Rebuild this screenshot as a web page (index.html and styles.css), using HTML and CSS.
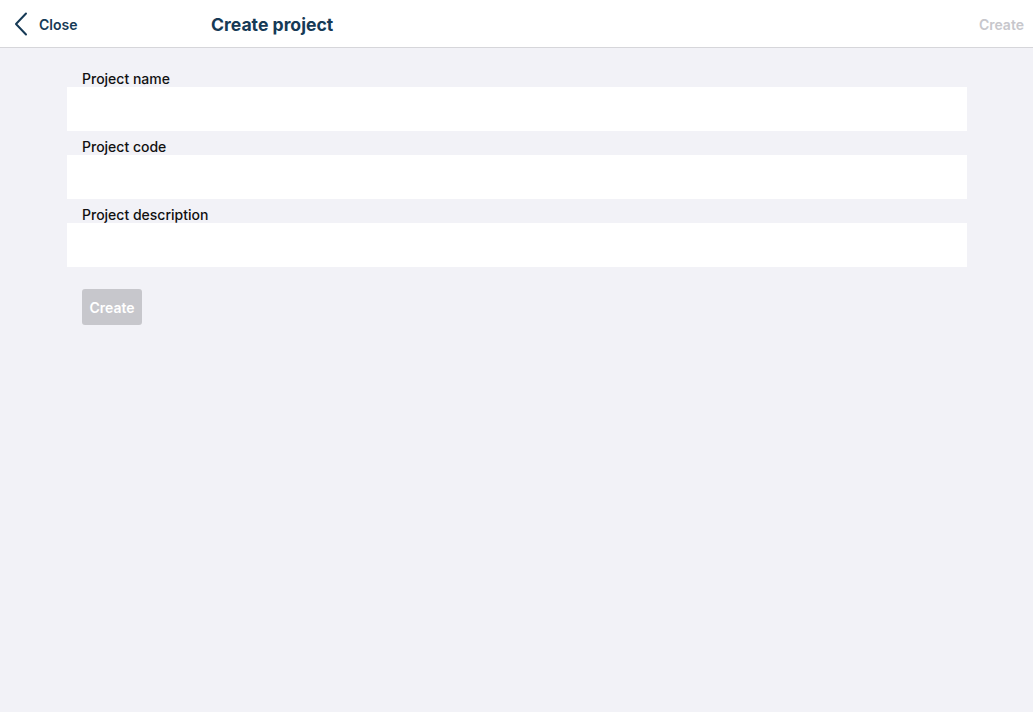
FILE: index.html
```html
<!DOCTYPE html>
<html lang="en">

<head>
    <meta charset="UTF-8">
    <meta name="viewport" content="width=device-width, initial-scale=1.0">
    <title>Create project</title>
    <link rel="stylesheet" href="styles.css">
</head>

<body>
    <header class="topbar">
        <a class="back" href="#">
            <svg width="14" height="24" viewBox="0 0 14 24"><path d="M12 1.5 L2 12 L12 22.5" fill="none" stroke="#163a56" stroke-width="2" stroke-linecap="round" stroke-linejoin="round"/></svg>
            <span>Close</span>
        </a>
        <h1 class="title">Create project</h1>
        <button class="top-create" disabled>Create</button>
    </header>
    <main class="form">
        <label class="label" for="name">Project name</label>
        <input class="field" type="text" id="name" />
        <label class="label" for="code">Project code</label>
        <input class="field" type="text" id="code" />
        <label class="label" for="desc">Project description</label>
        <input class="field" type="text" id="desc" />
        <div class="actions">
            <button class="create-btn" disabled>Create</button>
        </div>
    </main>
</body>

</html>
```

FILE: styles.css
```css
* {
    margin: 0;
    padding: 0;
    box-sizing: border-box;
}

body {
    background-color: #f2f2f7;
    font-family: Inter, "Noto Sans", sans-serif;
    height: 100vh;
}

.topbar {
    display: flex;
    align-items: center;
    height: 48px;
    background-color: #fff;
    border-bottom: 1px solid #d6d6da;
    padding: 0 9px 0 14px;
}

.back {
    display: flex;
    align-items: center;
    gap: 11px;
    text-decoration: none;
    color: #163a56;
    font-size: 14px;
    font-weight: 600;
    width: 197px;
}

.back span {
    margin-top: 1px;
}

.title {
    flex: 1;
    margin-top: 1px;
    color: #163a56;
    font-size: 17.6px;
    font-weight: 700;
}

.top-create {
    margin-top: 1px;
    border: none;
    background: none;
    color: #c7c7cc;
    font-family: inherit;
    font-size: 14px;
    font-weight: 600;
}

.form {
    display: flex;
    flex-direction: column;
    padding: 15px 0 0 67px;
    width: 967px;
}

.label {
    height: 24px;
    padding: 8px 0 0 15px;
    font-size: 14px;
    font-weight: 500;
    line-height: 16px;
    color: #111;
}

.field {
    height: 44px;
    border: none;
    background-color: #fff;
    outline: none;
}

.actions {
    padding: 22px 0 0 15px;
}

.create-btn {
    width: 60px;
    height: 36px;
    border: none;
    border-radius: 3px;
    background-color: #c7c7cc;
    color: #fff;
    font-family: inherit;
    font-size: 14px;
    font-weight: 600;
}
```
